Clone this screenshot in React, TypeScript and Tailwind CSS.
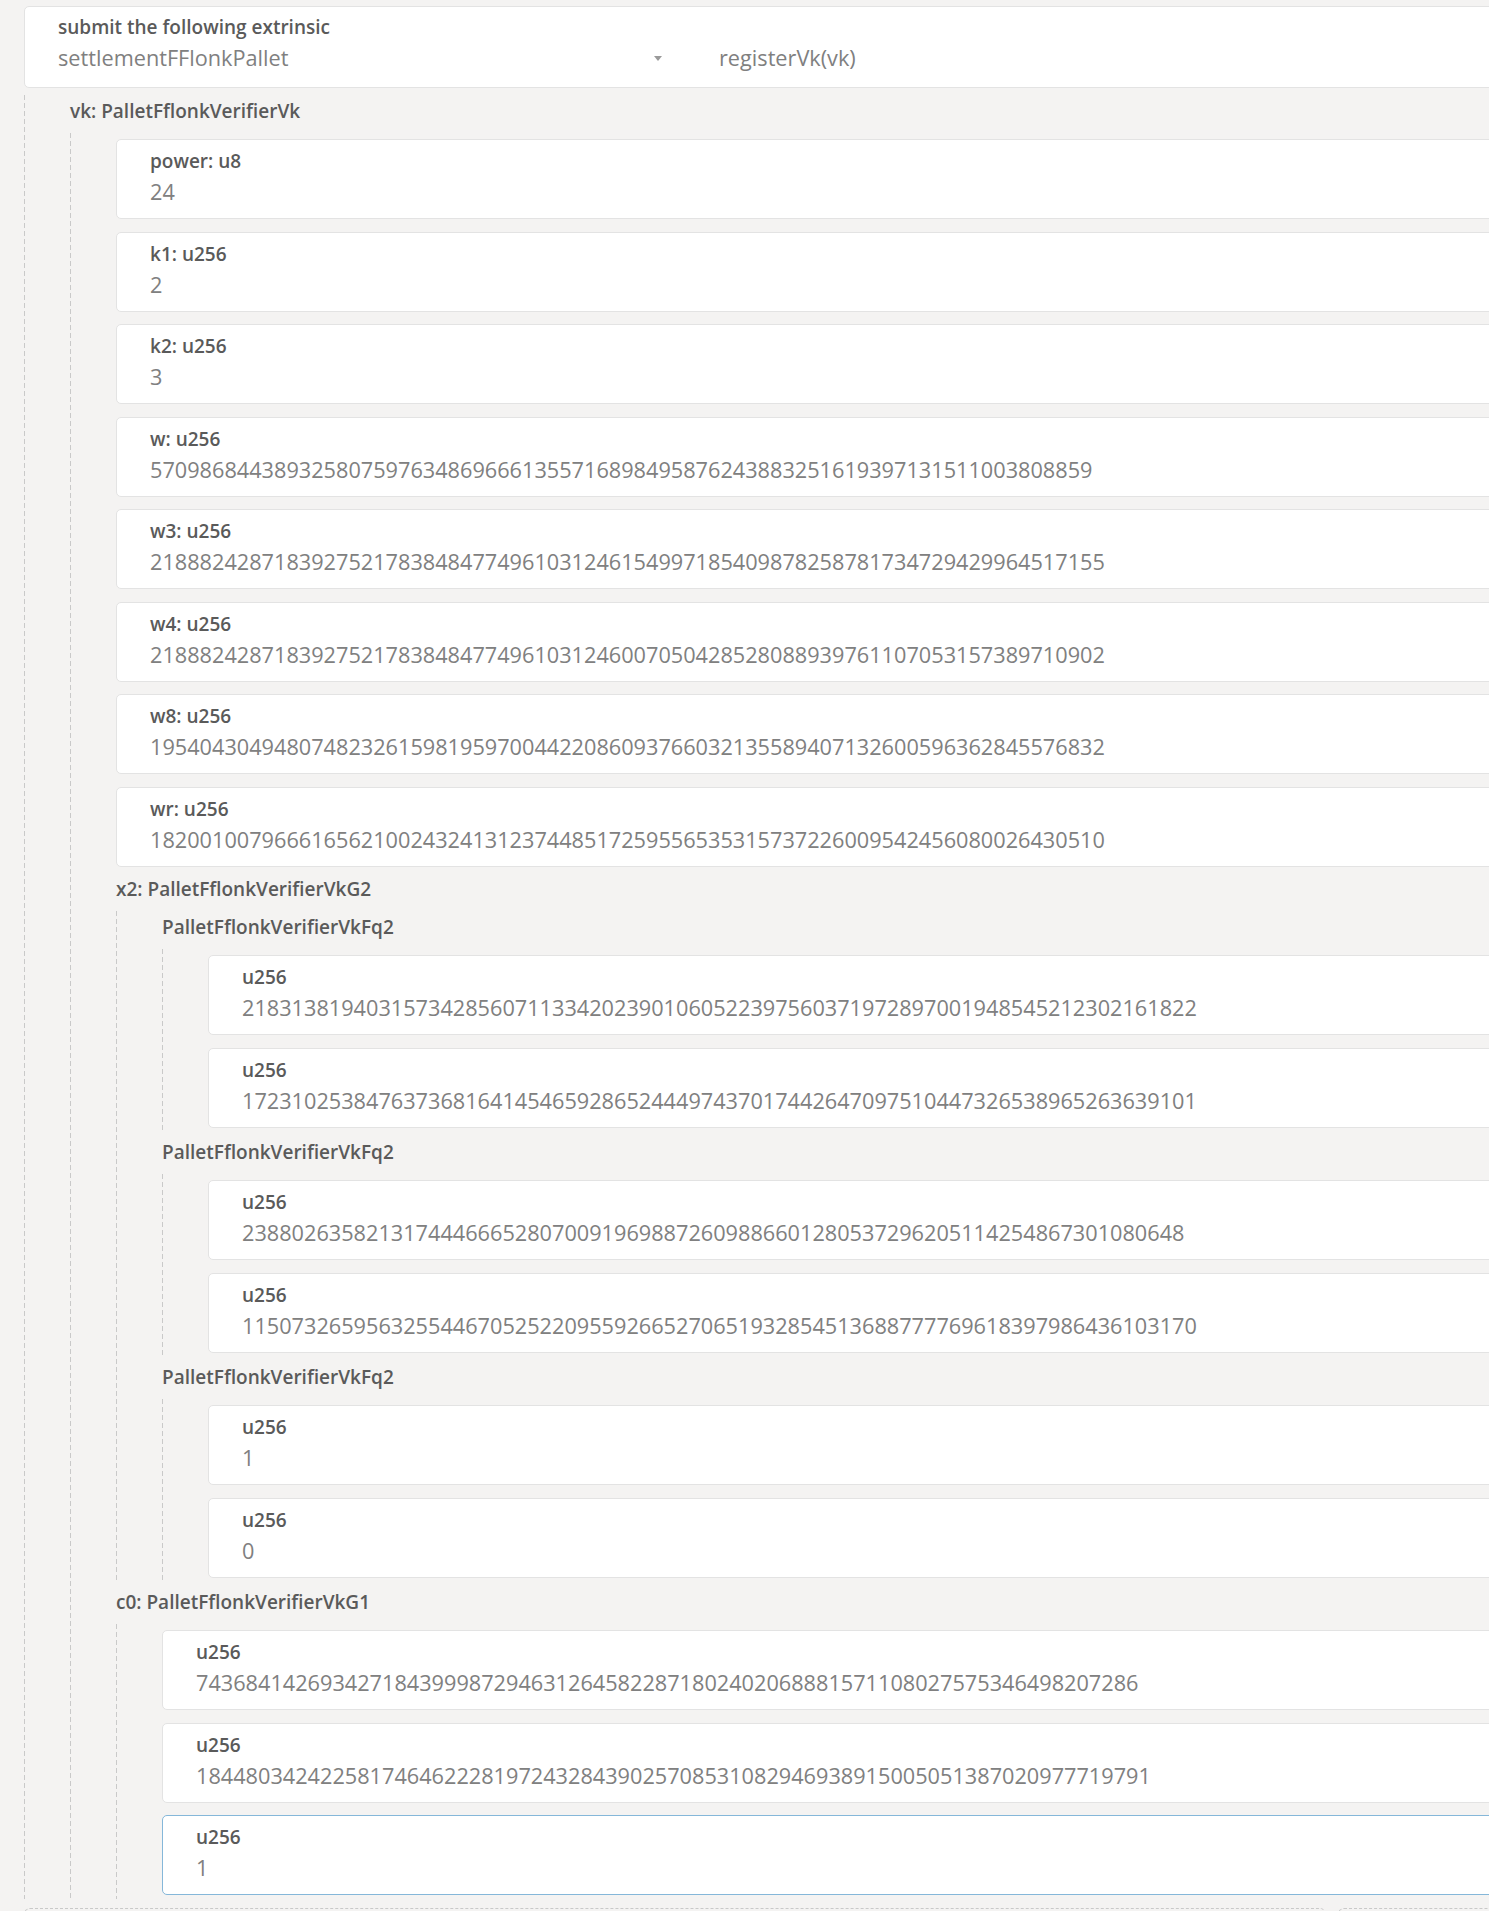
import React from 'react';

type Node =
  | { kind: 'field'; label: string; value: string; focused?: boolean }
  | { kind: 'group'; label: string; children: Node[] };

const f = (label: string, value: string, focused = false): Node => ({ kind: 'field', label, value, focused });
const g = (label: string, children: Node[]): Node => ({ kind: 'group', label, children });

const params: Node[] = [
  g('vk: PalletFflonkVerifierVk', [
    f('power: u8', '24'),
    f('k1: u256', '2'),
    f('k2: u256', '3'),
    f('w: u256', '5709868443893258075976348696661355716898495876243883251619397131511003808859'),
    f('w3: u256', '21888242871839275217838484774961031246154997185409878258781734729429964517155'),
    f('w4: u256', '21888242871839275217838484774961031246007050428528088939761107053157389710902'),
    f('w8: u256', '19540430494807482326159819597004422086093766032135589407132600596362845576832'),
    f('wr: u256', '18200100796661656210024324131237448517259556535315737226009542456080026430510'),
    g('x2: PalletFflonkVerifierVkG2', [
      g('PalletFflonkVerifierVkFq2', [
        f('u256', '21831381940315734285607113342023901060522397560371972897001948545212302161822'),
        f('u256', '17231025384763736816414546592865244497437017442647097510447326538965263639101'),
      ]),
      g('PalletFflonkVerifierVkFq2', [
        f('u256', '2388026358213174446665280700919698872609886601280537296205114254867301080648'),
        f('u256', '11507326595632554467052522095592665270651932854513688777769618397986436103170'),
      ]),
      g('PalletFflonkVerifierVkFq2', [f('u256', '1'), f('u256', '0')]),
    ]),
    g('c0: PalletFflonkVerifierVkG1', [
      f('u256', '7436841426934271843999872946312645822871802402068881571108027575346498207286'),
      f('u256', '18448034242258174646222819724328439025708531082946938915005051387020977719791'),
      f('u256', '1', true),
    ]),
  ]),
];

function Field({ label, value, focused }: { label: string; value: string; focused?: boolean }) {
  return (
    <div className="pb-[4px]">
      <div
        className={`h-[80px] rounded-[5px] border bg-white pl-[33px] pt-[10px] ${
          focused ? 'border-[#85b7d9]' : 'border-[#e3e3e3]'
        }`}
      >
        <div className="whitespace-nowrap text-[19px] font-semibold leading-[22px] text-[#5a5a5a]">{label}</div>
        <div className="mt-[6px] whitespace-nowrap text-[21.7px] leading-[28px] text-[#808080]">{value}</div>
      </div>
    </div>
  );
}

// dashed guide line on the left drawn as a repeating gradient
function Children({ nodes, className = 'mt-[12px]' }: { nodes: Node[]; className?: string }) {
  return (
    <div
      className={`flex flex-col gap-[8.5px] bg-[linear-gradient(to_bottom,#c9c9c9_62%,transparent_62%)] bg-[length:1px_8px] bg-repeat-y pl-[46px] pt-[6px] ${className}`}
    >
      {nodes.map((n, i) => (
        <Item key={i} node={n} afterGroup={i > 0 && nodes[i - 1].kind === 'group'} />
      ))}
    </div>
  );
}

function Item({ node, afterGroup }: { node: Node; afterGroup: boolean }) {
  if (node.kind === 'field') return <Field label={node.label} value={node.value} focused={node.focused} />;
  return (
    <div className={`flex flex-col ${afterGroup ? 'mt-[2px]' : ''}`}>
      <div className="h-[20px] whitespace-nowrap text-[19px] font-semibold leading-[20px] text-[#5a5a5a]">
        {node.label}
      </div>
      <Children nodes={node.children} />
    </div>
  );
}

export default function App() {
  return (
    <div className="h-[1911px] overflow-hidden bg-[#f4f3f2] font-['Open_Sans',sans-serif]">
      <div className="w-[1560px] pt-[6px]">
        {/* extrinsic selector */}
        <div className="ml-[24px] h-[82px] rounded-[5px] border border-[#e3e3e3] bg-white pl-[33px] pt-[9px]">
          <div className="text-[19px] font-semibold leading-[22px] text-[#5a5a5a]">submit the following extrinsic</div>
          <div className="mt-[6px] flex h-[28px] items-center">
            <div className="flex w-[604px] items-center justify-between">
              <span className="text-[21.7px] leading-[28px] text-[#808080]">settlementFFlonkPallet</span>
              <span className="h-0 w-0 border-x-[4px] border-t-[5px] border-x-transparent border-t-[#9a9a9a]" />
            </div>
            <span className="ml-[57px] text-[21.7px] leading-[28px] text-[#808080]">registerVk(vk)</span>
          </div>
        </div>

        <Children nodes={params} className="ml-[24px] mt-[7px]" />

        <div className="mt-[9px] flex gap-[12px] pl-[24px]">
          <div className="h-[80px] w-[1302px] rounded-[6px] border border-dashed border-[#c9c9c9]" />
          <div className="h-[80px] flex-1 rounded-[6px] border border-dashed border-[#c9c9c9]" />
        </div>
      </div>
    </div>
  );
}
